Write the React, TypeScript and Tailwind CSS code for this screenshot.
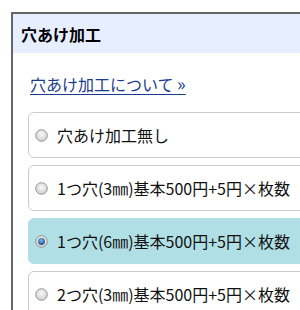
const options = [
  { label: '穴あけ加工無し', checked: false },
  { label: '1つ穴(3㎜)基本500円+5円×枚数', checked: false },
  { label: '1つ穴(6㎜)基本500円+5円×枚数', checked: true },
  { label: '2つ穴(3㎜)基本500円+5円×枚数', checked: false },
]

function Radio({ checked }: { checked: boolean }) {
  return (
    <svg width="13" height="13" viewBox="0 0 13 13" className="shrink-0">
      <defs>
        <radialGradient id="rg-off" cx="50%" cy="40%" r="60%">
          <stop offset="0%" stopColor="#fafafa" />
          <stop offset="100%" stopColor="#cdcdcd" />
        </radialGradient>
        <radialGradient id="rg-on" cx="45%" cy="35%" r="65%">
          <stop offset="0%" stopColor="#7fb8f0" />
          <stop offset="100%" stopColor="#1a4a88" />
        </radialGradient>
      </defs>
      <circle cx="6.5" cy="6.5" r="5.8" fill="url(#rg-off)" stroke="#969696" strokeWidth="1" />
      {checked && <circle cx="6.5" cy="6.5" r="3.4" fill="url(#rg-on)" />}
    </svg>
  )
}

export default function App() {
  return (
    <div
      className="w-[300px] h-[310px] overflow-hidden bg-white pl-[11px] pt-[12px]"
      style={{ fontFamily: '"Noto Sans CJK JP", "Noto Sans", sans-serif' }}
    >
      <div className="w-[320px] h-[320px] border-l-2 border-t-2 border-[#666]">
        <div className="h-[39px] bg-[#e6eeff] px-[8px] flex items-center">
          <span className="text-[16px] font-bold text-black">穴あけ加工</span>
        </div>
        <div className="pt-[19px] pl-[17px]">
          <a href="#" className="text-[16px] text-[#1a3c8e] underline underline-offset-[3px] leading-[24px]">
            穴あけ加工について <span className="text-[18px] leading-[16px]">»</span>
          </a>
        </div>
        <div className="mt-[16px] ml-[15px] flex flex-col gap-[7px]">
          {options.map((o) => (
            <div
              key={o.label}
              className={`h-[46px] flex items-center gap-[9px] pl-[6px] rounded-[6px] border ${
                o.checked ? 'bg-[#b0dfe5] border-[#b0dfe5]' : 'bg-white border-[#cccccc]'
              }`}
            >
              <Radio checked={o.checked} />
              <span className="text-[16px] text-[#111] whitespace-nowrap">{o.label}</span>
            </div>
          ))}
        </div>
      </div>
    </div>
  )
}
